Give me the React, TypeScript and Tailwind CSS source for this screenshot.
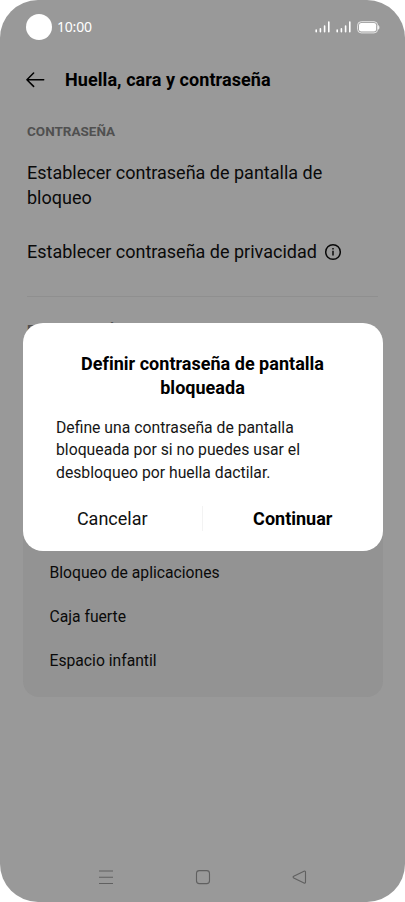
import React from "react";

function SignalIcon() {
  return (
    <svg width="16" height="12" viewBox="0 0 16 12" fill="none" stroke="#fff" strokeWidth="1.6" strokeLinecap="round">
      <path d="M1.2 10.7v-1.6M5.4 10.7V7.8M9.6 10.7V5M13.8 10.7V1.1" />
    </svg>
  );
}

function BatteryIcon() {
  return (
    <svg width="23" height="13" viewBox="0 0 23 13" fill="none">
      <rect x="0.6" y="0.7" width="20" height="11.2" rx="3.6" stroke="#e6e6e6" strokeWidth="1" />
      <rect x="2" y="2.1" width="17.2" height="8.4" rx="2.2" fill="#fff" />
      <path d="M21.3 4.4c1 .4 1.2 3.4 0 4z" fill="#fff" stroke="#fff" strokeWidth=".5" />
    </svg>
  );
}

function StatusBar() {
  return (
    <div className="flex h-[54px] items-center pl-[26px] pr-[25px]">
      <div className="size-[26px] rounded-full bg-white" />
      <span className="-mt-px ml-[5px] font-['Noto_Sans',sans-serif] text-[14px] tracking-[-0.2px] text-white">10:00</span>
      <div className="ml-auto flex items-center">
        <SignalIcon />
        <div className="w-[5px]" />
        <SignalIcon />
        <div className="w-[5px]" />
        <BatteryIcon />
      </div>
    </div>
  );
}

function Dialog() {
  return (
    <div className="absolute left-[22.5px] top-[323px] flex h-[227.5px] w-[360px] flex-col rounded-[20px] bg-white pt-[29px] text-black">
      <h2 className="text-center text-[18px] font-bold leading-[24px] tracking-[0.02px]">
        Definir contraseña de pantalla<br />bloqueada
      </h2>
      <p className="mt-[16.5px] pl-[33.5px] text-[15.75px] leading-[22.5px] text-[#161616]">
        Define una contraseña de pantalla<br />bloqueada por si no puedes usar el<br />desbloqueo por huella dactilar.
      </p>
      <div className="mt-[21px] flex h-[26px] items-center text-[18px]">
        <button className="flex-1 text-[#111]">Cancelar</button>
        <div className="h-[25px] w-px bg-[#f3f3f3]" />
        <button className="flex-1 font-bold">Continuar</button>
      </div>
    </div>
  );
}

export default function App() {
  return (
    <div className="h-[902px] w-[405px] bg-white">
      <div className="relative flex h-full w-full flex-col overflow-hidden rounded-[38px] bg-[#999] font-[Roboto,sans-serif] text-[#0a0a0a]">
        <StatusBar />
        <header className="flex h-[52px] items-center pl-[26px]">
          <svg width="19" height="16" viewBox="0 0 19 16" fill="none" stroke="#000" strokeWidth="1.5" strokeLinecap="round" strokeLinejoin="round">
            <path d="M17.7 7.7H.9M7.6 1L.9 7.7l6.7 6.7" />
          </svg>
          <h1 className="-mt-[2px] ml-[20px] text-[18px] font-bold tracking-[0.07px] text-black">Huella, cara y contraseña</h1>
        </header>
        <section className="mx-[27px] h-[191px] border-b border-[#8f8f8f] pt-[17px]">
          <h3 className="text-[13.5px] font-bold leading-[17px] text-[#505050]">CONTRASEÑA</h3>
          <p className="mt-[20px] whitespace-nowrap text-[18px] leading-[25px]">
            Establecer contraseña de pantalla de<br />bloqueo
          </p>
          <div className="mt-[29px] flex items-center whitespace-nowrap text-[18px] leading-[25px]">
            Establecer contraseña de privacidad
            <svg className="ml-[7px]" width="18" height="18" viewBox="0 0 18 18" fill="none" stroke="#0a0a0a" strokeWidth="1.5">
              <circle cx="9" cy="9" r="7.3" />
              <path d="M9 7.8v4.8M9 5v1.6" />
            </svg>
          </div>
        </section>
        <section className="ml-[27px] h-[43px] pt-[24px]">
          <h3 className="text-[13.5px] font-bold leading-[17px] text-[#505050]">DATOS BIOMÉTRICOS</h3>
        </section>
        <div className="mx-[22.5px] mt-[160px] h-[197px] rounded-[16px] bg-[#939393] pl-[27px] pt-[51px] text-[15.7px]">
          <p className="h-[44px] leading-[44px]">Bloqueo de aplicaciones</p>
          <p className="h-[44px] leading-[44px]">Caja fuerte</p>
          <p className="h-[44px] leading-[44px]">Espacio infantil</p>
        </div>
        <nav className="mt-auto flex h-[50px] items-center justify-between pl-[98px] pr-[98px]">
          <svg width="16" height="16" viewBox="0 0 16 16" fill="none" stroke="#606060" strokeWidth="1.1">
            <path d="M1 2h14M1 8.3h14M1 14.5h14" />
          </svg>
          <svg width="16" height="16" viewBox="0 0 16 16" fill="none" stroke="#606060" strokeWidth="1.1">
            <rect x="1.5" y="1.6" width="13" height="13" rx="2.8" />
          </svg>
          <svg width="16" height="16" viewBox="0 0 16 16" fill="none" stroke="#606060" strokeWidth="1.1">
            <path d="M2.7 7.3 13 2.2c.8-.4 1.5 0 1.5.8v10.2c0 .8-.7 1.2-1.5.8L2.7 8.9c-.8-.4-.8-1.2 0-1.6z" />
          </svg>
        </nav>
        <Dialog />
      </div>
    </div>
  );
}
